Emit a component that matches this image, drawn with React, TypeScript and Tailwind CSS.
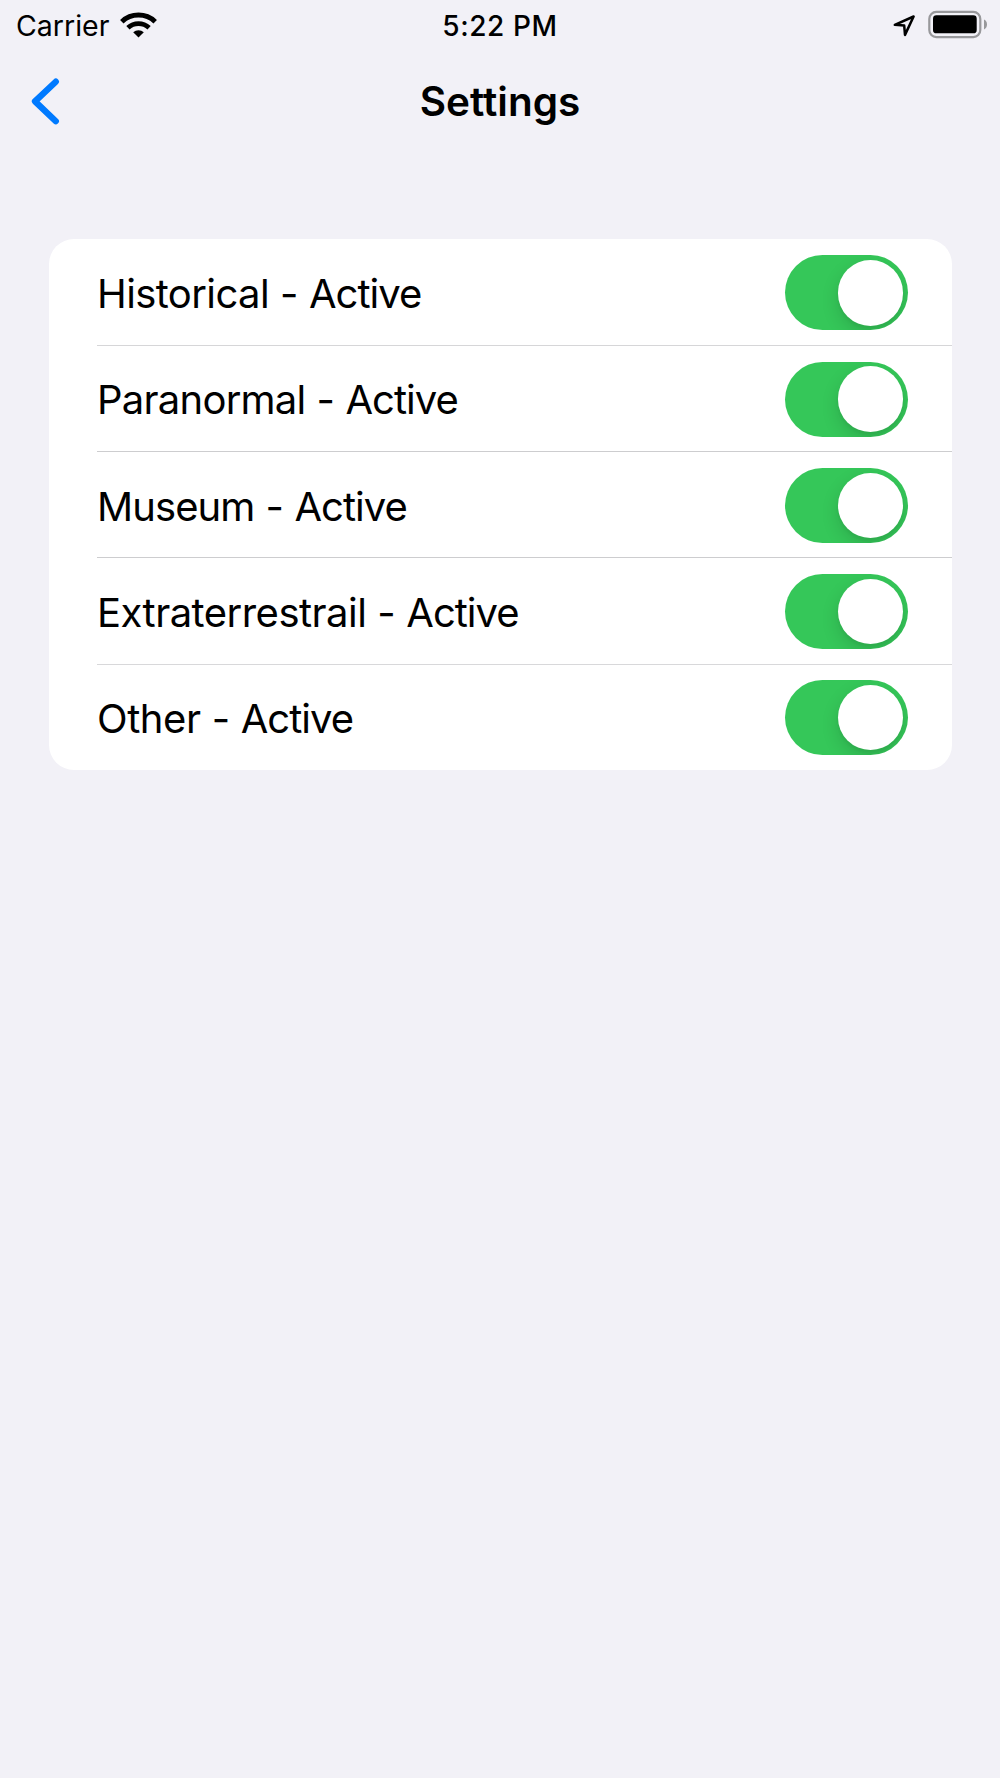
const rows = [
  { name: 'Historical', tracking: 'tracking-[-0.6px]', line: 'bg-[#d6d6d8]' },
  { name: 'Paranormal', tracking: 'tracking-[-0.75px]', line: 'bg-[#cdcdcf]' },
  { name: 'Museum', tracking: 'tracking-[-0.9px]', line: 'bg-[#cdcdcf]' },
  { name: 'Extraterrestrail', tracking: 'tracking-[-0.53px]', line: 'bg-[#d8d8da]' },
  { name: 'Other', tracking: 'tracking-[-0.4px]', line: '' },
];

function Toggle() {
  return (
    <div className="mt-px flex h-[75px] w-[123px] shrink-0 items-center justify-end overflow-hidden rounded-full bg-[#35c759] pr-[4.8px]">
      <div className="size-[65.3px] rounded-full bg-white shadow-[0_7px_18px_rgba(0,0,0,0.14),0_3px_3px_rgba(0,0,0,0.04)]" />
    </div>
  );
}

function StatusBar() {
  return (
    <div className="grid h-[50px] grid-cols-3 items-center">
      <div className="flex items-center pl-[16px]">
        <span className="w-[104px] whitespace-nowrap pt-px text-[28.5px] leading-[50px] tracking-[0px]">Carrier</span>
        <svg className="h-[28px] w-[38px]" viewBox="0 0 38 28" fill="none" stroke="#000">
          <path d="M1.8 9.7 A24.3 24.3 0 0 1 35.2 9.7" strokeWidth="5" />
          <path d="M7.9 15.8 A15.8 15.8 0 0 1 29.1 15.8" strokeWidth="4.8" />
          <path d="M18.5 25.5 L13.2 20.2 A8 8 0 0 1 23.8 20.2 Z" fill="#000" stroke="none" />
        </svg>
      </div>
      <div className="whitespace-nowrap pt-px text-center text-[28px] font-medium leading-[50px] tracking-[0.6px]">5:22 PM</div>
      <div className="flex items-center justify-end">
        <svg className="h-[50px] w-[107px]" viewBox="893 0.7 107 50">
          <path d="M894.8 24.5 L913.6 16.2 L905 34.6 L904.2 25.3 Z" fill="none" stroke="#000" strokeWidth="2.5" strokeLinejoin="round" />
          <rect x="929.3" y="11.6" width="51" height="25.2" rx="7" fill="none" stroke="#98989b" strokeWidth="2.2" />
          <rect x="933" y="15" width="43.7" height="18" rx="3.4" />
          <path d="M984 19.3 Q987 20.8 987 24.2 Q987 27.6 984 29.1 Z" fill="#98989b" />
        </svg>
      </div>
    </div>
  );
}

export default function App() {
  return (
    <div className="flex h-[1778px] w-[1000px] flex-col bg-[#f2f1f7] font-['Inter',sans-serif] text-black">
      <StatusBar />
      <div className="grid h-[103px] grid-cols-3 items-center">
        <svg className="ml-[30px] h-[50px] w-[32px]" viewBox="30 76.8 32 50" fill="none" stroke="#007aff" strokeWidth="6.3" strokeLinecap="round" strokeLinejoin="round">
          <path d="M55.8 81.5 L35 101.2 L55.8 121" />
        </svg>
        <h1 className="pt-px text-center text-[40.5px] font-semibold leading-[50px] tracking-[0px]">Settings</h1>
      </div>
      <div className="mx-[48.5px] mt-[86.3px] flex h-[531.2px] flex-col overflow-hidden rounded-[25px] bg-white">
        {rows.map((row, i) => (
          <div key={row.name} className="ml-[48.5px] flex flex-1 flex-col">
            <div className="flex flex-1 items-center justify-between pr-[43.5px]">
              <span className="flex whitespace-pre pt-[3.6px] text-[40px] leading-[50px]">
                <span className={row.tracking}>{row.name}</span>
                <span className="tracking-[-0.3px]"> - </span>
                <span className="tracking-[-1px]">Active</span>
              </span>
              <Toggle />
            </div>
            {i < rows.length - 1 && <div className={`-mb-[0.4px] -mt-[0.6px] h-px ${row.line}`} />}
          </div>
        ))}
      </div>
    </div>
  );
}
